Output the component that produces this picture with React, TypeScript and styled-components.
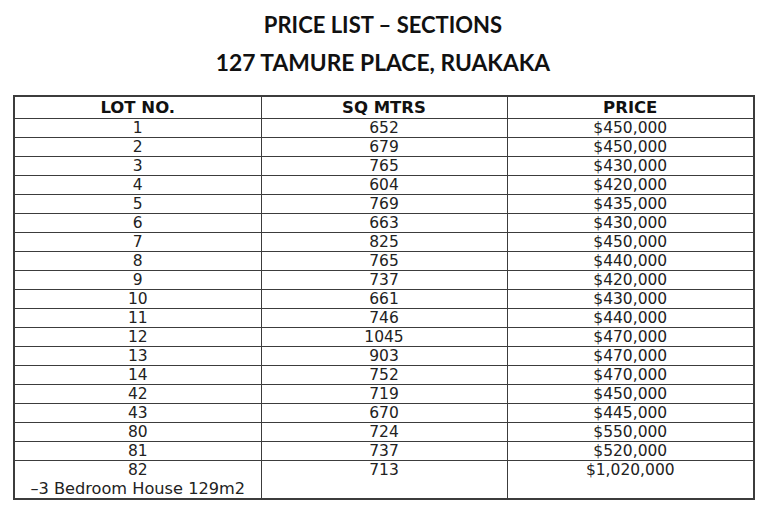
import React from 'react';
import styled, {createGlobalStyle} from 'styled-components';

const GlobalStyle = createGlobalStyle`
    html, body {
        margin: 0;
        padding: 0;
        background: #fff;
    }
`

type Lot = {lot: string; sqm: string; price: string; note?: string};

const lots: Lot[] = [
    {lot: '1', sqm: '652', price: '$450,000'},
    {lot: '2', sqm: '679', price: '$450,000'},
    {lot: '3', sqm: '765', price: '$430,000'},
    {lot: '4', sqm: '604', price: '$420,000'},
    {lot: '5', sqm: '769', price: '$435,000'},
    {lot: '6', sqm: '663', price: '$430,000'},
    {lot: '7', sqm: '825', price: '$450,000'},
    {lot: '8', sqm: '765', price: '$440,000'},
    {lot: '9', sqm: '737', price: '$420,000'},
    {lot: '10', sqm: '661', price: '$430,000'},
    {lot: '11', sqm: '746', price: '$440,000'},
    {lot: '12', sqm: '1045', price: '$470,000'},
    {lot: '13', sqm: '903', price: '$470,000'},
    {lot: '14', sqm: '752', price: '$470,000'},
    {lot: '42', sqm: '719', price: '$450,000'},
    {lot: '43', sqm: '670', price: '$445,000'},
    {lot: '80', sqm: '724', price: '$550,000'},
    {lot: '81', sqm: '737', price: '$520,000'},
    {lot: '82', sqm: '713', price: '$1,020,000', note: '\u20133 Bedroom House 129m2'},
];

export default function App() {
    return (
        <Page>
            <GlobalStyle />
            <Title>PRICE LIST &ndash; SECTIONS</Title>
            <Address>127 TAMURE PLACE, RUAKAKA</Address>
            <Table>
                <colgroup>
                    <col style={{width: 247}} />
                    <col style={{width: 246}} />
                    <col style={{width: 247}} />
                </colgroup>
                <thead>
                    <tr>
                        <Head>LOT NO.</Head>
                        <Head>SQ MTRS</Head>
                        <Head>PRICE</Head>
                    </tr>
                </thead>
                <tbody>
                    {lots.map(l => (
                        <Row key={l.lot} tall={!!l.note}>
                            <Cell>{l.lot}{l.note && <Note>{l.note}</Note>}</Cell>
                            <Cell>{l.sqm}</Cell>
                            <Cell>{l.price}</Cell>
                        </Row>
                    ))}
                </tbody>
            </Table>
        </Page>
    );
}

const Page = styled.div`
    width: 768px;
    height: 512px;
    padding: 13px 0 0 13px;
    box-sizing: border-box;
    display: flex;
    flex-direction: column;
    align-items: flex-start;
`
const Title = styled.div`
    width: 740px;
    text-align: center;
    font-family: Lato, "Open Sans", sans-serif;
    font-weight: 700;
    font-size: 22px;
    line-height: 24px;
    color: #111;
`
const Address = styled(Title)`
    margin-top: 13px;
    font-size: 22.8px;
`
const Table = styled.table`
    margin-top: 21px;
    width: 740px;
    border-collapse: collapse;
    table-layout: fixed;
    border: 2px solid #3c3c3c;
`
const Head = styled.th`
    height: 21px;
    padding: 0;
    border: 1.5px solid #3c3c3c;
    font-family: "DejaVu Sans", Verdana, sans-serif;
    font-weight: 700;
    font-size: 16.5px;
    line-height: 20px;
    color: #111;
    text-align: center;
`
const Row = styled.tr<{tall?: boolean}>`
    height: ${props => props.tall ? 37 : 19}px;
    vertical-align: top;
`
const Cell = styled.td`
    padding: 0;
    border: 1.5px solid #3c3c3c;
    font-family: "DejaVu Sans", Verdana, sans-serif;
    font-size: 15.5px;
    line-height: 18px;
    color: #222;
    text-align: center;
`
const Note = styled.div`
    font-size: 16.2px;
    line-height: 19px;
`
